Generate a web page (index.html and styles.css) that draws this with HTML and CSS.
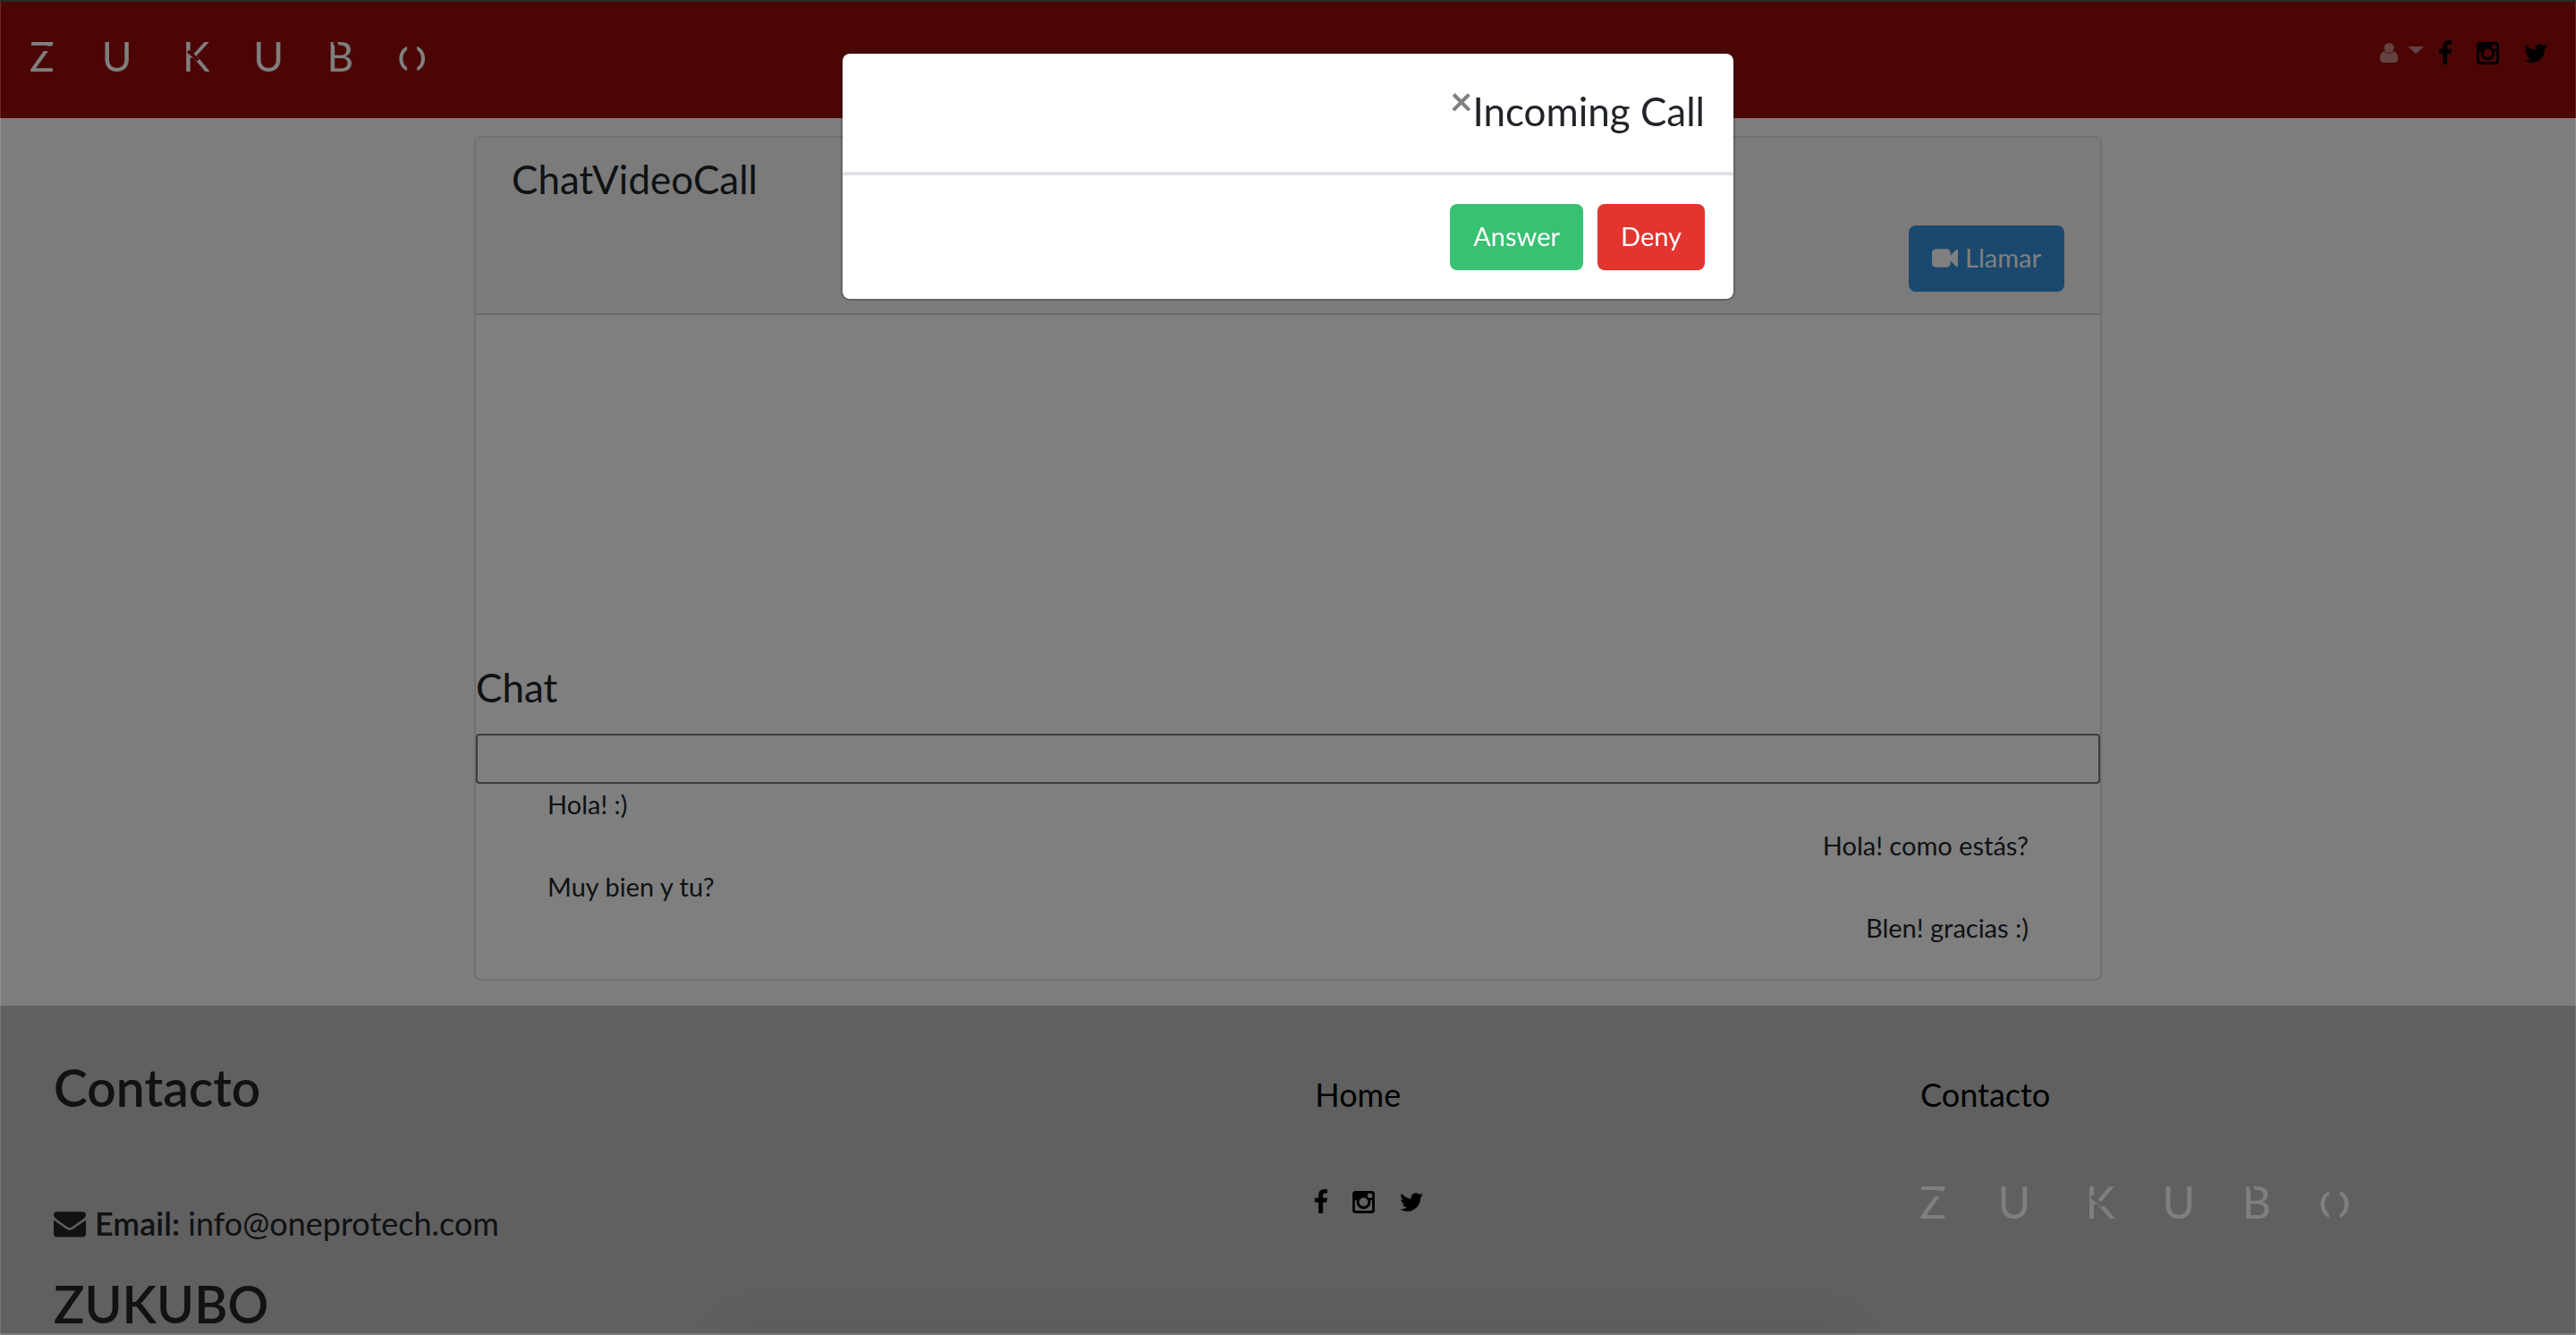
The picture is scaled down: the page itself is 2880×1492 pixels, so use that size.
FILE: index.html
```html
<!DOCTYPE html>
<html lang="es">
<head>
<meta charset="utf-8">
<title>ChatVideoCall</title>
<link rel="stylesheet" href="styles.css">
</head>
<body>
<svg class="sprite" aria-hidden="true">
  <symbol id="facebook" viewBox="479 0 864 1792"><path d="M1343 12v264h-157q-86 0-116 36t-30 108v189h293l-39 296h-254v759h-306v-759h-255v-296h255v-218q0-186 104-288.5t277-102.5q147 0 228 12z"/></symbol>
  <symbol id="instagram" viewBox="128 0 1536 1792"><path d="M1490 1426v-648h-135q20 63 20 131 0 126-64 232.5t-174 168.5-240 62q-197 0-337-135.5t-140-327.5q0-68 20-131h-141v648q0 26 17.5 43.5t43.5 17.5h1069q25 0 43-17.5t18-43.5zm-284-533q0-124-90.5-211.5t-218.5-87.5q-127 0-217.5 87.5t-90.5 211.5 90.5 211.5 217.5 87.5q128 0 218.5-87.5t90.5-211.5zm284-360v-165q0-28-20-48.5t-49-20.5h-174q-29 0-49 20.5t-20 48.5v165q0 29 20 49t49 20h174q29 0 49-20t20-49zm174-208v1142q0 81-58 139t-139 58h-1142q-81 0-139-58t-58-139v-1142q0-81 58-139t139-58h1142q81 0 139 58t58 139z"/></symbol>
  <symbol id="twitter" viewBox="108 0 1576 1792"><path d="M1684 408q-67 98-162 167 1 14 1 42 0 130-38 259.5t-115.5 248.5-184.5 210.5-258 146-323 54.5q-271 0-496-145 35 4 78 4 225 0 401-138-105-2-188-64.5t-114-159.5q33 5 61 5 43 0 85-11-112-23-185.5-111.5t-73.5-205.5v-4q68 38 146 41-66-44-105-115t-39-154q0-88 44-163 121 149 294.5 238.5t371.5 99.5q-8-38-8-74 0-134 94.5-228.5t228.5-94.5q140 0 236 102 109-21 205-78-37 115-142 178 93-10 186-50z"/></symbol>
  <symbol id="user" viewBox="0 0 20 22"><circle cx="10" cy="5.5" r="5.5"/><path d="M5 9.6C2 9.8 0 12.500 0 17.500C0 20.300 1.500 22 4 22H16C18.500 22 20 20.300 20 17.500C20 12.500 18 9.800 15 9.600C13.500 11 12 11.800 10 11.800C8 11.800 6.500 11 5 9.600Z"/></symbol>
  <symbol id="video" viewBox="0 0 1792 1792"><path d="M1792 352v1088q0 42-39 59-13 5-25 5-27 0-45-19l-403-403v166q0 119-84.5 203.5t-203.5 84.5h-704q-119 0-203.5-84.5t-84.5-203.5v-704q0-119 84.5-203.5t203.5-84.5h704q119 0 203.5 84.5t84.5 203.5v165l403-402q18-19 45-19 12 0 25 5 39 17 39 59z"/></symbol>
  <symbol id="envelope" viewBox="0 0 1792 1792"><path d="M1792 710v794q0 66-47 113t-113 47h-1472q-66 0-113-47t-47-113v-794q44 49 101 87 362 246 497 345 57 42 92.5 65.5t94.5 48 110 24.500h2q51 0 110-24.500t94.500-48 92.500-65.500q170-123 498-345 57-39 100-87zm0-294q0 79-49 151t-122 123q-376 261-468 325-10 7-42.500 31t-54 38.500-52 32.500-57.500 27-50 9h-2q-23 0-50-9t-57.500-27-52-32.500-54-38.500-42.500-31q-91-64-262-182.500t-205-142.500q-62-42-117-115.500t-55-136.500q0-78 41.500-130t118.500-52h1472q65 0 112.500 47t47.500 113z"/></symbol>
  <!-- Gaps cut out of the wordmark's letters -->
  <mask id="cuts" maskUnits="userSpaceOnUse" x="0" y="-14" width="484" height="64">
    <rect y="-14" width="484" height="64" fill="#fff"/>
    <g stroke="#000" fill="none">
      <path d="M0 8H30" stroke-width="6"/>
      <path d="M191 11L204 22" stroke-width="4"/>
      <path d="M369 0L375 10" stroke-width="5"/>
      <path d="M463 0V40" stroke-width="12"/>
    </g>
  </mask>
</svg>

<header class="navbar">
  <a href="#" class="brand" aria-label="ZUKUBO">
    <svg class="logo logo-small" viewBox="0 -14 484 64"><g mask="url(#cuts)"><text class="logo-text" y="36" x="14 105 201 289 376">ZUKUB<tspan class="logo-o" x="463">O</tspan></text></g></svg>
  </a>
  <nav class="nav-icons">
    <button type="button" class="user-menu" aria-label="Usuario"><svg class="icon-user"><use href="#user"/></svg><span class="caret"></span></button>
    <div class="social">
      <a href="#" aria-label="Facebook"><svg class="icon fb"><use href="#facebook"/></svg></a>
      <a href="#" aria-label="Instagram"><svg class="icon ig"><use href="#instagram"/></svg></a>
      <a href="#" aria-label="Twitter"><svg class="icon tw"><use href="#twitter"/></svg></a>
    </div>
  </nav>
</header>

<main class="content">
  <section class="card">
    <div class="card-header">
      <h4 class="title">ChatVideoCall</h4>
      <button type="button" class="btn btn-primary"><svg class="icon-video"><use href="#video"/></svg>Llamar</button>
    </div>
    <div class="video-area"></div>
    <h4 class="title chat-title"><label for="message">Chat</label></h4>
    <input type="text" id="message" class="message-input">
    <ul class="messages">
      <li>Hola! :)</li>
      <li class="mine">Hola! como estás?</li>
      <li>Muy bien y tu?</li>
      <li class="mine">Blen! gracias :)</li>
    </ul>
  </section>
</main>

<footer class="footer">
  <div>
    <h2 class="footer-heading">Contacto</h2>
    <p class="email"><svg class="icon-mail"><use href="#envelope"/></svg><span><b>Email:</b> info@oneprotech.com</span></p>
    <h2 class="footer-heading">ZUKUBO</h2>
  </div>
  <div class="footer-col">
    <a href="#" class="footer-link">Home</a>
    <div class="social">
      <a href="#" aria-label="Facebook"><svg class="icon fb"><use href="#facebook"/></svg></a>
      <a href="#" aria-label="Instagram"><svg class="icon ig"><use href="#instagram"/></svg></a>
      <a href="#" aria-label="Twitter"><svg class="icon tw"><use href="#twitter"/></svg></a>
    </div>
  </div>
  <div class="footer-col footer-brand">
    <a href="#" class="footer-link">Contacto</a>
    <svg class="logo" viewBox="0 -14 484 64"><g mask="url(#cuts)"><text class="logo-text" y="36" x="14 105 201 289 376">ZUKUB<tspan class="logo-o" x="463">O</tspan></text></g></svg>
  </div>
</footer>

<div class="backdrop">
  <div class="modal" role="dialog" aria-modal="true" aria-labelledby="call-title">
    <div class="modal-header">
      <button type="button" class="close" aria-label="Close">×</button>
      <h4 class="title modal-title" id="call-title">Incoming Call</h4>
    </div>
    <div class="modal-body">
      <button type="button" class="btn btn-success">Answer</button>
      <button type="button" class="btn btn-danger">Deny</button>
    </div>
  </div>
</div>
<div class="frame"></div>
</body>
</html>
```
FILE: styles.css
```css
* { box-sizing: border-box; }
body {
  margin: 0;
  background: #f8fafc;
  color: #212529;
  font: 400 29px/46px Lato, "Open Sans", sans-serif;
}
h2, h4, p, ul { margin: 0; padding: 0; }
ul { list-style: none; }
a { color: #000; text-decoration: none; }
button, input { font: inherit; }
svg { display: block; fill: currentColor; }
.sprite { position: absolute; width: 0; height: 0; }

.icon { height: 29px; }
.fb { width: 14px; }
.ig { width: 25px; }
.tw { width: 26px; }
.social { display: flex; gap: 28px; }

.logo { width: 484px; height: 64px; color: #fff; }
.logo-small { width: 446px; height: 59px; }
.logo-text { font: 400 50px Lato, sans-serif; text-anchor: middle; }
.logo-o { font-size: 44px; }

.navbar {
  display: flex;
  justify-content: space-between;
  align-items: flex-start;
  height: 132px;
  padding: 34px 32px 0 34px;
  background: #960a0a;
}
.nav-icons { display: flex; gap: 17px; align-items: flex-start; padding-top: 11px; }
.user-menu {
  display: flex;
  gap: 11px;
  padding: 3px 0 0;
  border: 0;
  background: none;
  color: rgba(255, 255, 255, .5);
}
.icon-user { width: 20px; height: 22px; }
.caret {
  width: 18px;
  height: 8px;
  margin-top: 4px;
  background: currentColor;
  clip-path: polygon(0 0, 100% 0, 50% 100%);
}

.content { max-width: 1820px; margin: 0 auto; padding: 20px 0 28px; }
.card {
  border: 2px solid #dfdfdf;
  border-radius: 8px;
  background: #fff;
  padding-bottom: 34px;
}
.card-header {
  display: flex;
  flex-direction: column;
  gap: 29px;
  padding: 23px 40px 24px;
  border-bottom: 2px solid #d8d8d8;
  background: #f7f7f7;
}
.title { font-size: 44px; font-weight: 400; line-height: 46px; }
.video-area { height: 393px; }
.chat-title { margin-bottom: 29px; }
.message-input {
  display: block;
  width: 100%;
  height: 56px;
  border: 2px solid #767676;
  border-radius: 4px;
  background: #fff;
}
.messages { padding: 0 80px; }
.mine { text-align: right; }

.btn {
  display: flex;
  align-items: center;
  height: 74px;
  padding: 0 26px 2px;
  border: 0;
  border-radius: 8px;
  color: #fff;
}
.btn-primary { align-self: flex-end; gap: 8px; background: #3490dc; }
.btn-success { background: #38c172; }
.btn-danger { background: #e3342f; }
.icon-video { width: 29px; height: 29px; }

.footer {
  display: grid;
  grid-template-columns: 25fr 12fr 12fr;
  padding: 58px 56px 0 60px;
  background: #c0c0c0;
}
.footer-heading { font-size: 57px; font-weight: 600; line-height: 66px; }
.email {
  display: flex;
  align-items: center;
  gap: 10px;
  margin: 90px 0 28px;
  font-size: 36px;
  line-height: 58px;
}
.email b { font-weight: 600; }
.icon-mail { width: 36px; height: 36px; }
.footer-col { display: flex; flex-direction: column; gap: 77px; padding-top: 12px; }
.footer-brand { gap: 60px; }
.footer-link { font-size: 36px; line-height: 58px; }

.backdrop {
  position: fixed;
  inset: 0;
  padding-top: 58px;
  background: rgba(0, 0, 0, .5);
}
.modal {
  max-width: 1000px;
  margin: 0 auto;
  border: 2px solid rgba(0, 0, 0, .2);
  border-radius: 10px;
  background: #fff;
  background-clip: padding-box;
}
.modal-header {
  display: flex;
  justify-content: flex-end;
  padding: 30px 32px 34px;
  border-bottom: 4px solid #dee2e6;
}
.modal-title { line-height: 68px; }
.close {
  height: 44px;
  padding: 0;
  border: 0;
  background: none;
  color: #7f7f7f;
  font-size: 44px;
  font-weight: 700;
  line-height: 44px;
}
.modal-body { display: flex; justify-content: flex-end; gap: 16px; padding: 32px; }

.frame {
  position: fixed;
  inset: 0;
  border: solid rgba(255, 255, 255, .15);
  border-width: 2px 1px 0;
  border-top-color: #2a2a2a;
  overflow: hidden;
  pointer-events: none;
}
.frame::after {
  content: "";
  position: absolute;
  top: 100%;
  left: 28%;
  right: 28%;
  height: 40px;
  box-shadow: 0 0 80px rgba(0, 0, 0, .1);
}
```
